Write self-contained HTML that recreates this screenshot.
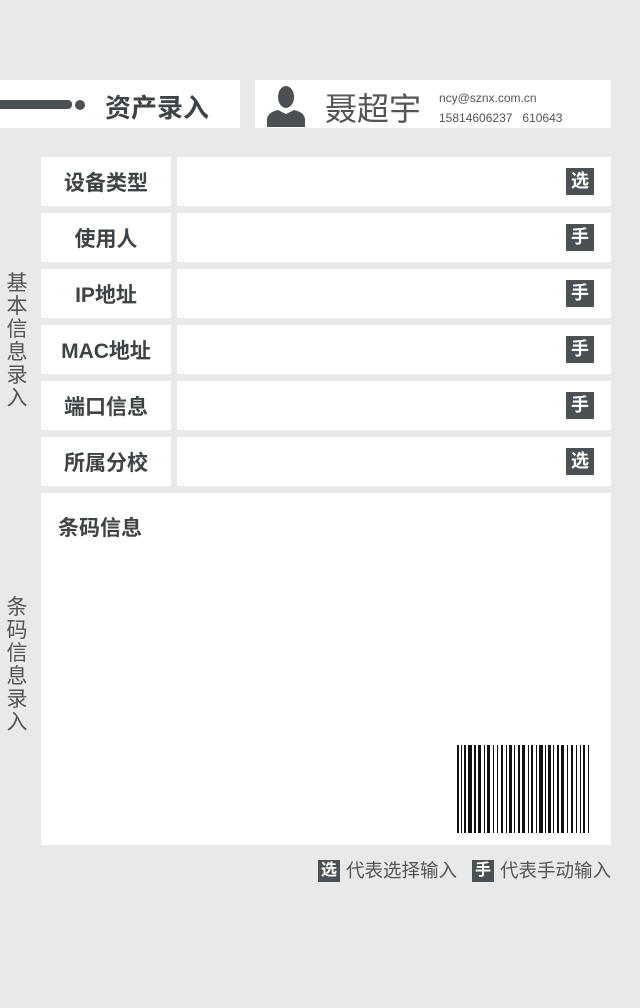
<!DOCTYPE html>
<html><head><meta charset="utf-8"><style>
body{margin:0;width:640px;height:1008px;background:#e8e9eb;position:relative;overflow:hidden;font-family:"Liberation Sans","Noto Sans CJK SC",sans-serif;color:#444}
.a{position:absolute}
.w{position:absolute;background:#fff}
.lab{position:absolute;left:41px;width:130px;background:#fff;font-weight:bold;font-size:21px;color:#3d4346;text-align:center;line-height:53px;height:49px}
.val{position:absolute;left:177px;width:434px;height:49px;background:#fff}
.bd{position:absolute;right:17px;top:11px;width:28px;height:27px;background:#4a5053;color:#fff;font-weight:bold;font-size:18px;line-height:27px;text-align:center}
.vt{position:absolute;left:5px;width:24px;font-size:21px;line-height:23px;color:#555;text-align:center}
</style></head><body>
<div class="w" style="left:0;top:80px;width:240px;height:48px"></div>
<div class="a" style="left:0;top:100px;width:72px;height:9px;background:#4a5053;border-radius:0 4px 4px 0"></div>
<div class="a" style="left:75px;top:100px;width:10px;height:10px;border-radius:50%;background:#4a5053"></div>
<div class="a" style="left:105px;top:88px;font-size:26px;font-weight:bold;color:#3d4346">资产录入</div>
<div class="w" style="left:255px;top:80px;width:356px;height:48px"></div>
<svg class="a" style="left:264px;top:84px" width="44" height="44" viewBox="0 0 44 44"><ellipse cx="22" cy="13" rx="8" ry="11" fill="#4a5053"/><path d="M3 43 L3 35 Q4 28 14 26 L22 30 L30 26 Q40 28 41 35 L41 43 Z" fill="#4a5053"/></svg>
<div class="a" style="left:325px;top:84px;font-size:32px;color:#555">聂超宇</div>
<div class="a" style="left:439px;top:91px;font-size:12px;color:#555">ncy@sznx.com.cn</div>
<div class="a" style="left:439px;top:111px;font-size:12px;color:#555">15814606237&nbsp;&nbsp;&nbsp;610643</div>

<div class="vt" style="top:272px">基<br>本<br>信<br>息<br>录<br>入</div>
<div class="vt" style="top:596px">条<br>码<br>信<br>息<br>录<br>入</div>

<div class="lab" style="top:157px">设备类型</div><div class="val" style="top:157px"><div class="bd">选</div></div>
<div class="lab" style="top:213px">使用人</div><div class="val" style="top:213px"><div class="bd">手</div></div>
<div class="lab" style="top:269px">IP地址</div><div class="val" style="top:269px"><div class="bd">手</div></div>
<div class="lab" style="top:325px">MAC地址</div><div class="val" style="top:325px"><div class="bd">手</div></div>
<div class="lab" style="top:381px">端口信息</div><div class="val" style="top:381px"><div class="bd">手</div></div>
<div class="lab" style="top:437px">所属分校</div><div class="val" style="top:437px"><div class="bd">选</div></div>

<div class="w" style="left:41px;top:493px;width:570px;height:352px"></div>
<div class="a" style="left:58px;top:512px;font-size:21px;font-weight:bold;color:#3d4346">条码信息</div>
<svg class="a" style="left:456px;top:745px" width="136" height="88" viewBox="0 0 136 88">
<g fill="#111">
<rect x="1" y="0" width="2" height="88"/><rect x="5" y="0" width="1" height="88"/><rect x="8" y="0" width="2" height="88"/><rect x="12" y="0" width="4" height="88"/><rect x="18" y="0" width="2" height="88"/><rect x="22" y="0" width="3" height="88"/><rect x="28" y="0" width="1" height="88"/><rect x="31" y="0" width="3" height="88"/><rect x="37" y="0" width="1" height="88"/><rect x="41" y="0" width="1" height="88"/><rect x="45" y="0" width="2" height="88"/><rect x="50" y="0" width="1" height="88"/><rect x="53" y="0" width="3" height="88"/><rect x="58" y="0" width="1" height="88"/><rect x="62" y="0" width="2" height="88"/><rect x="66" y="0" width="3" height="88"/><rect x="72" y="0" width="1" height="88"/><rect x="75" y="0" width="2" height="88"/><rect x="80" y="0" width="1" height="88"/><rect x="83" y="0" width="4" height="88"/><rect x="89" y="0" width="1" height="88"/><rect x="92" y="0" width="3" height="88"/><rect x="97" y="0" width="1" height="88"/><rect x="101" y="0" width="2" height="88"/><rect x="105" y="0" width="3" height="88"/><rect x="111" y="0" width="1" height="88"/><rect x="115" y="0" width="2" height="88"/><rect x="120" y="0" width="1" height="88"/><rect x="124" y="0" width="1" height="88"/><rect x="127" y="0" width="2" height="88"/><rect x="132" y="0" width="1" height="88"/>
</g></svg>

<div class="a" style="left:318px;top:860px;width:22px;height:22px;background:#4a5053;color:#fff;font-weight:bold;font-size:16px;line-height:22px;text-align:center">选</div>
<div class="a" style="left:346px;top:859px;font-size:18.5px;color:#555;line-height:24px">代表选择输入</div>
<div class="a" style="left:472px;top:860px;width:22px;height:22px;background:#4a5053;color:#fff;font-weight:bold;font-size:16px;line-height:22px;text-align:center">手</div>
<div class="a" style="left:500px;top:859px;font-size:18.5px;color:#555;line-height:24px">代表手动输入</div>
</body></html>
